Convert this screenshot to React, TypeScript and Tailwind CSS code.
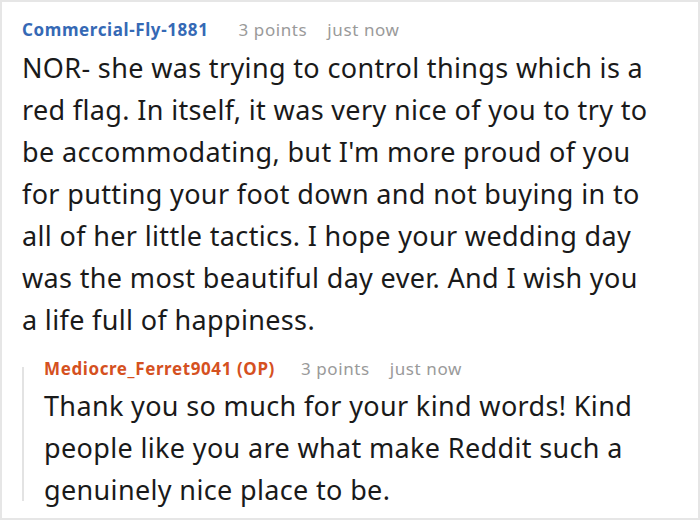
export default function App() {
  return (
    <div
      className="w-[700px] h-[520px] bg-white border-2 border-[#e6e6e6] overflow-hidden text-[#1a1a1a]"
      style={{ fontFamily: '"Noto Sans", "Open Sans", sans-serif' }}
    >
      <div className="pl-[20px] pr-[46px] pt-[16px]">
        <div className="flex items-baseline h-[24px] leading-[24px] tracking-[0.6px] whitespace-nowrap">
          <span className="text-[17px] font-bold text-[#3569b5]">Commercial-Fly-1881</span>
          <span className="ml-[30px] text-[17px] text-[#9a9a9a]">3 points</span>
          <span className="ml-[20px] text-[17px] text-[#9a9a9a]">just now</span>
        </div>
        <p className="mt-[5px] text-[27px] leading-[42px] tracking-[0.35px]">
          NOR- she was trying to control things which is a red flag. In itself, it was very nice of you
          to try to be accommodating, but I'm more proud of you for putting your foot down and not buying
          in to all of her little tactics. I hope your wedding day was the most beautiful day ever. And I
          wish you a life full of happiness.
        </p>
        <div className="relative mt-[16px] pl-[22px]">
          <span className="absolute left-0 top-[10px] bottom-[10px] w-[2px] bg-[#e3e3e3]" />
          <div className="flex items-baseline h-[24px] leading-[24px] tracking-[0.6px] whitespace-nowrap">
            <span className="text-[17px] font-bold text-[#d5511f]">Mediocre_Ferret9041 (OP)</span>
            <span className="ml-[26px] text-[17px] text-[#9a9a9a]">3 points</span>
            <span className="ml-[20px] text-[17px] text-[#9a9a9a]">just now</span>
          </div>
          <p className="mt-[4px] text-[27px] leading-[42px] tracking-[0.35px]">
            Thank you so much for your kind words! Kind people like you are what make Reddit such a
            genuinely nice place to be.
          </p>
        </div>
      </div>
    </div>
  );
}
